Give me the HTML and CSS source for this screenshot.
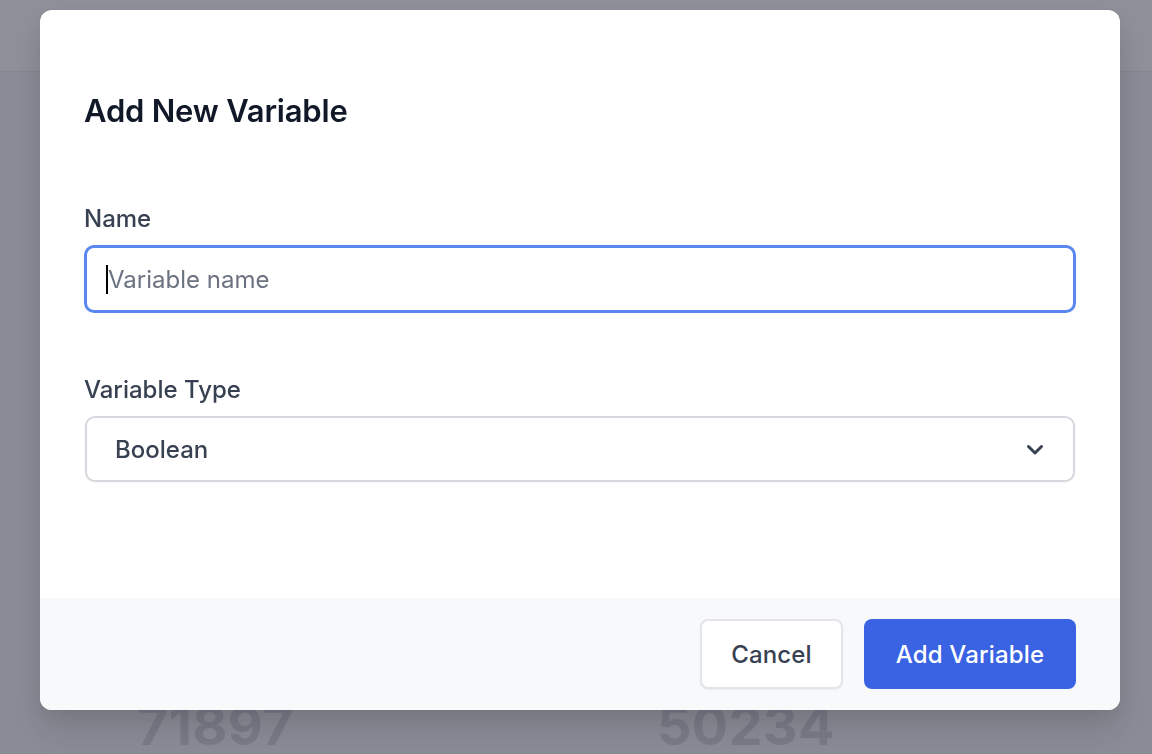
FILE: index.html
```html
<!DOCTYPE html>
<html lang="en">
<head>
<meta charset="utf-8">
<title>Add New Variable</title>
<link rel="stylesheet" href="styles.css">
</head>
<body>
<div class="page">
  <header class="topbar"></header>
  <main class="content">
    <div class="stats">
      <div class="stat">71897</div>
      <div class="stat">50234</div>
    </div>
  </main>
</div>

<div class="overlay">
  <div class="modal" role="dialog" aria-labelledby="modal-title">
    <div class="modal-body">
      <h2 class="modal-title" id="modal-title">Add New Variable</h2>
      <div class="field field-name">
        <label class="field-label" for="var-name">Name</label>
        <div class="input-wrap">
          <span class="caret"></span>
          <input class="text-input" id="var-name" type="text" placeholder="Variable name">
        </div>
      </div>
      <div class="field field-type">
        <label class="field-label" for="var-type">Variable Type</label>
        <div class="select" id="var-type">
          <span class="select-value">Boolean</span>
          <svg class="chevron" width="18" height="12" viewBox="0 0 18 12" aria-hidden="true">
            <path d="M2.5 2.5 L9 9 L15.5 2.5" fill="none" stroke="#374151" stroke-width="3" stroke-linecap="round" stroke-linejoin="round"/>
          </svg>
        </div>
      </div>
    </div>
    <div class="modal-footer">
      <button class="btn btn-cancel" type="button">Cancel</button>
      <button class="btn btn-primary" type="button">Add Variable</button>
    </div>
  </div>
</div>
</body>
</html>
```

FILE: styles.css
```css
* { box-sizing: border-box; }

html, body {
  margin: 0;
  padding: 0;
  height: 100%;
}

body {
  font-family: Inter, "Noto Sans", "Liberation Sans", sans-serif;
  background: #e6e9ef;
  overflow: hidden;
}

.page {
  height: 754px;
  display: flex;
  flex-direction: column;
}

.topbar {
  height: 72px;
  background: #ffffff;
  border-bottom: 1px solid #c9ccd4;
  flex: none;
}

.content {
  flex: 1;
  padding: 626px 0 0 137px;
}

.stats {
  display: grid;
  grid-template-columns: 520px 1fr;
}

.stat {
  font-size: 54px;
  font-weight: 700;
  line-height: 56px;
  color: #9699a4;
  letter-spacing: 0.3px;
}

.overlay {
  position: fixed;
  inset: 0;
  background: rgba(115, 118, 129, 0.8);
  padding: 10px 0 0 40px;
}

.modal {
  width: 1080px;
  height: 700px;
  background: #ffffff;
  border-radius: 12px;
  overflow: hidden;
  display: flex;
  flex-direction: column;
  box-shadow: 0 20px 40px rgba(0, 0, 0, 0.12), 0 8px 16px rgba(0, 0, 0, 0.06);
}

.modal-body {
  flex: 1;
  padding: 83px 44px 0 44px;
}

.modal-title {
  margin: 0;
  font-size: 31px;
  line-height: 36px;
  font-weight: 600;
  color: #111827;
  letter-spacing: -0.2px;
}

.field {
  display: flex;
  flex-direction: column;
  gap: 12px;
}

.field-name { margin-top: 76px; }
.field-type { margin-top: 63px; }

.field-label {
  font-size: 24px;
  line-height: 28px;
  font-weight: 500;
  color: #374151;
}

.input-wrap {
  position: relative;
}

.text-input {
  display: block;
  width: 100%;
  height: 68px;
  border: 3px solid #5a87ef;
  border-radius: 10px;
  padding: 0 21px;
  font-family: inherit;
  font-size: 24px;
  color: #111827;
  background: #ffffff;
  outline: none;
}

.text-input::placeholder {
  color: #6b7280;
}

.caret {
  position: absolute;
  left: 22px;
  top: 20px;
  width: 2px;
  height: 29px;
  background: #000000;
}

.select {
  height: 66px;
  margin: 0 1px;
  border: 2px solid #d5d8de;
  border-radius: 10px;
  padding: 0 29px 0 28px;
  display: flex;
  align-items: center;
  justify-content: space-between;
  background: #ffffff;
  box-shadow: 0 1px 2px rgba(0, 0, 0, 0.04);
}

.select-value {
  font-size: 24px;
  font-weight: 500;
  color: #374151;
}

.chevron {
  display: block;
  margin-top: 2px;
}

.modal-footer {
  flex: none;
  height: 112px;
  background: #f8f9fb;
  padding: 0 44px;
  display: flex;
  align-items: center;
  justify-content: flex-end;
  gap: 21px;
}

.btn {
  height: 70px;
  border-radius: 8px;
  font-family: inherit;
  font-size: 24px;
  font-weight: 500;
  letter-spacing: 0.15px;
  cursor: pointer;
}

.btn-cancel {
  width: 143px;
  background: #ffffff;
  color: #374151;
  border: 2px solid #e3e5e9;
  box-shadow: 0 1px 2px rgba(0, 0, 0, 0.05);
}

.btn-primary {
  width: 212px;
  background: #3a63e3;
  color: #ffffff;
  border: none;
}
```
